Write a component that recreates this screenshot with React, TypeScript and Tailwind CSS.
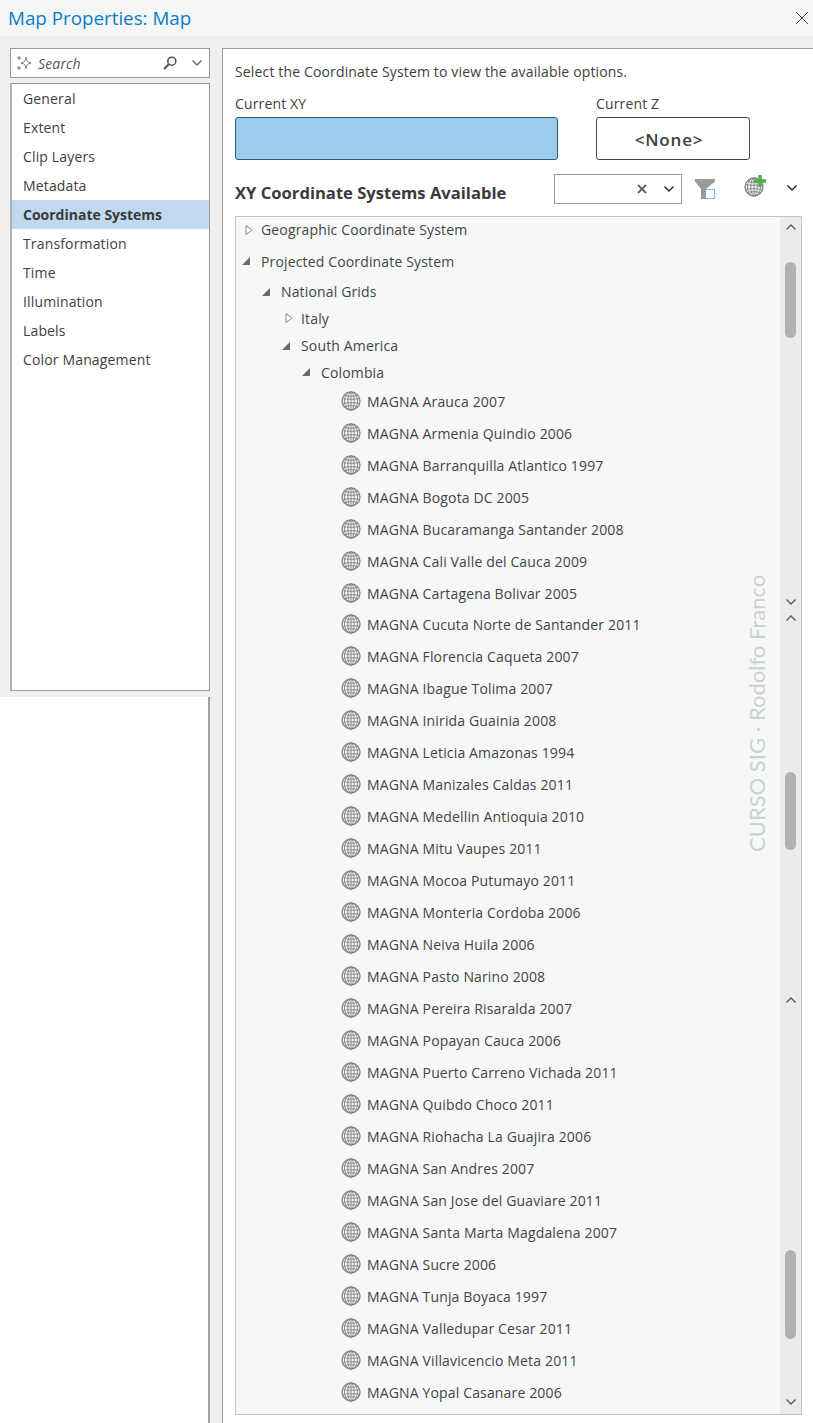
import React from "react";

const font = { fontFamily: "'Open Sans', 'Noto Sans', sans-serif" };

const navItems = [
  "General",
  "Extent",
  "Clip Layers",
  "Metadata",
  "Coordinate Systems",
  "Transformation",
  "Time",
  "Illumination",
  "Labels",
  "Color Management",
];

const systems = [
  "MAGNA Arauca 2007",
  "MAGNA Armenia Quindio 2006",
  "MAGNA Barranquilla Atlantico 1997",
  "MAGNA Bogota DC 2005",
  "MAGNA Bucaramanga Santander 2008",
  "MAGNA Cali Valle del Cauca 2009",
  "MAGNA Cartagena Bolivar 2005",
  "MAGNA Cucuta Norte de Santander 2011",
  "MAGNA Florencia Caqueta 2007",
  "MAGNA Ibague Tolima 2007",
  "MAGNA Inirida Guainia 2008",
  "MAGNA Leticia Amazonas 1994",
  "MAGNA Manizales Caldas 2011",
  "MAGNA Medellin Antioquia 2010",
  "MAGNA Mitu Vaupes 2011",
  "MAGNA Mocoa Putumayo 2011",
  "MAGNA Monteria Cordoba 2006",
  "MAGNA Neiva Huila 2006",
  "MAGNA Pasto Narino 2008",
  "MAGNA Pereira Risaralda 2007",
  "MAGNA Popayan Cauca 2006",
  "MAGNA Puerto Carreno Vichada 2011",
  "MAGNA Quibdo Choco 2011",
  "MAGNA Riohacha La Guajira 2006",
  "MAGNA San Andres 2007",
  "MAGNA San Jose del Guaviare 2011",
  "MAGNA Santa Marta Magdalena 2007",
  "MAGNA Sucre 2006",
  "MAGNA Tunja Boyaca 1997",
  "MAGNA Valledupar Cesar 2011",
  "MAGNA Villavicencio Meta 2011",
  "MAGNA Yopal Casanare 2006",
];

const Globe = ({ className = "" }: { className?: string }) => (
  <svg viewBox="0 0 20 20" className={className} fill="none" stroke="#858585" strokeWidth="0.900">
    <circle cx="10" cy="10" r="9" fill="#f0f0f0" strokeWidth="1.300" />
    <ellipse cx="10" cy="10" rx="3.200" ry="9" />
    <ellipse cx="10" cy="10" rx="6.600" ry="9" />
    <path d="M10 1v18M3.300 4.200c3.500 1.500 9.900 1.500 13.400 0M1.300 7.500c4.500 1 12.900 1 17.400 0M1.300 12.500c4.500-1 12.900-1 17.400 0M3.300 15.800c3.500-1.500 9.900-1.500 13.400 0" />
  </svg>
);

const Chevron = ({ up = false, color = "#555" }: { up?: boolean; color?: string }) => (
  <svg viewBox="0 0 12 8" className="w-3 h-2" fill="none" stroke={color} strokeWidth="1.400">
    <path d={up ? "M1.500 6.500 6 2l4.500 4.500" : "M1.500 1.500 6 6l4.500-4.500"} />
  </svg>
);

const ScrollChevron = ({ up = false, className = "" }: { up?: boolean; className?: string }) => (
  <div className={`h-4 flex items-center justify-center shrink-0 ${className}`}>
    <Chevron up={up} color="#5a5a5a" />
  </div>
);

// tree expander: hollow = collapsed, filled = open
const Expander = ({ open }: { open: boolean }) =>
  open ? (
    <svg viewBox="0 0 10 10" className="w-2.5 h-2.5">
      <path d="M1 9 9 1v8z" fill="#6a6a6a" />
    </svg>
  ) : (
    <svg viewBox="0 0 10 12" className="w-2.5 h-3">
      <path d="M2 1.500 8 6l-6 4.500z" fill="#fff" stroke="#8a8a8a" />
    </svg>
  );

const TreeRow = ({
  label,
  open,
  className,
}: {
  label: string;
  open: boolean;
  className: string;
}) => (
  <div className={`flex items-center ${className}`}>
    <div className={open ? "w-5 flex shrink-0" : "w-[17px] flex shrink-0"}>
      <Expander open={open} />
    </div>
    <span>{label}</span>
  </div>
);

export default function App() {
  return (
    <div
      className="w-[813px] h-[1423px] flex flex-col bg-white text-[#404040] text-[14px] tracking-[0.15px] overflow-hidden"
      style={font}
    >
      <header className="h-9 bg-[#f5f7f7] flex items-center justify-between pl-2 pr-1 shrink-0">
        <h1 className="text-[18.8px] text-[#0a7bc4] font-normal tracking-normal">Map Properties: Map</h1>
        <svg viewBox="0 0 14 14" className="w-3.5 h-3.5" fill="none" stroke="#4a4a4a" strokeWidth="1">
          <path d="M1 1l12 12M13 1 1 13" />
        </svg>
      </header>

      <div className="flex-1 flex min-h-0">
        {/* left nav */}
        <aside className="w-[210px] flex flex-col shrink-0">
          <div className="h-[661px] bg-[#eeeff1] pt-3 pl-2.5 shrink-0">
            <div className="w-[200px] h-[30px] bg-white border border-[#9a9a9a] flex items-center pl-[5px] pr-[6px]">
              <svg viewBox="0 0 16 16" className="w-4 h-4 shrink-0" fill="none" stroke="#666" strokeWidth="0.900">
                <path d="M10 2.500c.5 3.500 1.500 4.800 5 5.500-3.500.7-4.500 2-5 5.500-.5-3.500-1.500-4.800-5-5.500 3.500-.7 4.500-2 5-5.500z" />
                <path d="M3 1v4M1 3h4M3 11v4M1 13h4" />
              </svg>
              <span className="ml-1.5 italic text-[#555] flex-1">Search</span>
              <svg viewBox="0 0 16 16" className="w-4 h-4 mr-[13px]" fill="none" stroke="#555">
                <circle cx="9.800" cy="6.200" r="4" strokeWidth="1.600" />
                <path d="M6.800 9.200 2 14" strokeWidth="2.200" />
              </svg>
              <Chevron color="#666" />
            </div>
            <nav className="mt-[5px] w-[200px] h-[608px] bg-white border border-[#9a9a9a] border-l-2 border-l-[#b0b0b0]">
              {navItems.map((item) => (
                <div
                  key={item}
                  className={
                    item === "Coordinate Systems"
                      ? "h-[29px] flex items-center pl-[11px] bg-[#c0d9ee] font-bold text-[#3a3a3a] tracking-normal"
                      : "h-[29px] flex items-center pl-[11px]"
                  }
                >
                  {item}
                </div>
              ))}
            </nav>
          </div>
          <div className="flex-1 bg-white border-r-2 border-[#a2a2a2]" />
        </aside>

        {/* gap strip */}
        <div className="w-3 bg-[#eeeff1] shrink-0" />

        {/* right panel */}
        <main className="flex-1 flex flex-col pt-3 bg-[#eeeff1] min-w-0">
          <div className="flex-1 bg-white border-t border-l border-[#9e9e9e] pl-3 flex flex-col">
            <p className="mt-[13px] leading-5">Select the Coordinate System to view the available options.</p>

            <div className="flex mt-[12px]">
              <div className="w-[323px]">
                <div className="h-[22px] leading-5">Current XY</div>
                <div className="h-[43px] mt-[1px] bg-[#9ccbec] border border-[#1f5f8a] rounded-[3px]" />
              </div>
              <div className="w-[154px] ml-[38px]">
                <div className="h-[22px] leading-5">Current Z</div>
                <div className="h-[43px] mt-[1px] border border-[#444] rounded-[3px] flex items-center justify-center pr-2 pt-[3px] text-[17px] font-semibold tracking-[0.8px]">
                  {"<None>"}
                </div>
              </div>
            </div>

            <div className="flex items-center h-[30px] mt-[14px]">
              <h2 className="w-[319px] text-[16.6px] font-bold text-[#3a3a3a] mt-2 tracking-normal">
                XY Coordinate Systems Available
              </h2>
              <div className="w-[128px] h-[30px] border border-[#9a9a9a] flex items-center justify-end pr-[6px]">
                <svg viewBox="0 0 10 10" className="w-2.5 h-2.5 mr-[16px]" stroke="#5f5f5f" strokeWidth="1.800" fill="none">
                  <path d="M1 1l8 8M9 1 1 9" />
                </svg>
                <Chevron color="#222" />
              </div>
              <svg viewBox="0 0 24 24" className="w-6 h-6 ml-[12px] mt-[2px]">
                <path d="M1 1h20v2.500L12 11v10H7V11L1 3.500z" fill="#9a9a9a" />
                <rect x="11.500" y="11.500" width="9" height="9" fill="#fff" stroke="#3b9ad9" strokeDasharray="2 1" />
              </svg>
              <div className="relative w-[22px] h-[22px] ml-[26px] mb-[4px]">
                <Globe className="w-5 h-5 absolute left-0 top-[1px]" />
                <svg viewBox="0 0 12 12" className="w-3 h-3 absolute right-0 -top-[1px]">
                  <path d="M6 0v12M0 6h12" stroke="#4caf50" strokeWidth="3.500" />
                </svg>
              </div>
              <div className="ml-[20px] mb-[2px]">
                <Chevron color="#222" />
              </div>
            </div>

            <div className="relative mt-[12px] mr-[11px] h-[1199px] border border-[#c4c4c4] bg-[#f6f8f8] flex">
              <div className="flex-1 pl-[6px] text-[#444]">
                <TreeRow label="Geographic Coordinate System" open={false} className="h-[25px] pl-[2px]" />
                <TreeRow label="Projected Coordinate System" open className="h-[37px] pt-[1px] -ml-[1px]" />
                <TreeRow label="National Grids" open className="h-[25px] pl-[19px]" />
                <TreeRow label="Italy" open={false} className="h-7 pl-[42px]" />
                <TreeRow label="South America" open className="h-[27px] pl-[39px]" />
                <TreeRow label="Colombia" open className="h-[26px] pl-[59px]" />
                {systems.map((name) => (
                  <div
                    key={name}
                    className={
                      name === "MAGNA Cartagena Bolivar 2005"
                        ? "h-8 -mb-[1px] flex items-center pl-[99px]"
                        : "h-8 flex items-center pl-[99px]"
                    }
                  >
                    <Globe className="w-5 h-5 mr-[6px] shrink-0" />
                    <span>{name}</span>
                  </div>
                ))}
              </div>

              {/* watermark */}
              <div className="absolute left-[505px] top-[357px] h-[278px] w-[30px] flex items-center justify-center [writing-mode:vertical-rl] rotate-180 text-[22px] font-normal tracking-normal text-[#cdd0d0] whitespace-nowrap [font-family:Lato,sans-serif]">
                CURSO SIG · Rodolfo Franco
              </div>

              {/* stitched scrollbars */}
              <div className="w-[21px] bg-[#ebebeb] flex flex-col items-center shrink-0">
                <ScrollChevron up className="mt-[2px]" />
                <div className="w-[11px] h-[76px] mt-[27px] rounded-full bg-[#b2b2b2] shrink-0" />
                <ScrollChevron className="mt-[256px]" />
                <ScrollChevron up />
                <div className="w-[11px] h-[78px] mt-[146px] rounded-full bg-[#b2b2b2] shrink-0" />
                <ScrollChevron up className="mt-[142px]" />
                <div className="w-[11px] h-[89px] mt-[242px] rounded-full bg-[#b2b2b2] shrink-0" />
                <ScrollChevron className="mt-[55px]" />
              </div>
            </div>
          </div>
        </main>
      </div>
    </div>
  );
}
